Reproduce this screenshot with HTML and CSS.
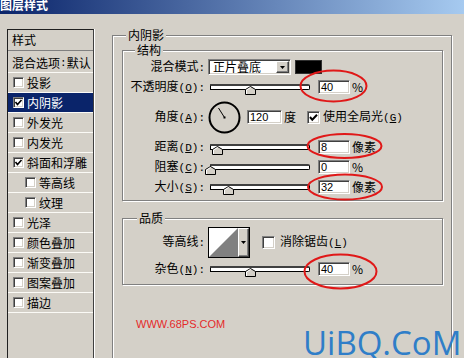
FILE: index.html
```html
<!DOCTYPE html>
<html lang="zh-CN">
<head>
<meta charset="utf-8">
<title>图层样式</title>
<link rel="stylesheet" href="styles.css">
</head>
<body>
<div class="titlebar"><span class="title">图层样式</span></div>
<div class="main">
  <div class="stylelist">
    <div class="lhdr">样式</div>
    <div class="item first">混合选项<span class="k">:</span>默认</div>
    <div class="item"><span class="cb"></span><span class="lt">投影</span></div>
    <div class="item sel"><span class="cb"><svg width="9" height="9" viewBox="0 0 9 9"><polyline points="1.5,4 3.5,6.5 7.5,2" fill="none" stroke="#000" stroke-width="1.6"/></svg></span><span class="lt">内阴影</span></div>
    <div class="item"><span class="cb"></span><span class="lt">外发光</span></div>
    <div class="item"><span class="cb"></span><span class="lt">内发光</span></div>
    <div class="item"><span class="cb"><svg width="9" height="9" viewBox="0 0 9 9"><polyline points="1.5,4 3.5,6.5 7.5,2" fill="none" stroke="#000" stroke-width="1.6"/></svg></span><span class="lt">斜面和浮雕</span></div>
    <div class="item sub"><span class="cb"></span><span class="lt">等高线</span></div>
    <div class="item sub"><span class="cb"></span><span class="lt">纹理</span></div>
    <div class="item"><span class="cb"></span><span class="lt">光泽</span></div>
    <div class="item"><span class="cb"></span><span class="lt">颜色叠加</span></div>
    <div class="item"><span class="cb"></span><span class="lt">渐变叠加</span></div>
    <div class="item"><span class="cb"></span><span class="lt">图案叠加</span></div>
    <div class="item"><span class="cb"></span><span class="lt">描边</span></div>
  </div>

  <div class="outer">
    <span class="legend">内阴影</span>

    <div class="grp struct">
      <span class="legend">结构</span>
      <div class="row">
        <div class="lbl">混合模式<span class="k">:</span></div>
        <div class="ctl">
          <div class="select"><span class="seltext">正片叠底</span><span class="dbtn"><svg width="5" height="3" viewBox="0 0 5 3"><polygon points="0,0 5,0 2.5,3" fill="#000"/></svg></span></div>
          <div class="swatch"></div>
        </div>
      </div>
      <div class="row">
        <div class="lbl">不透明度<span class="k">(<u>O</u>):</span></div>
        <div class="ctl">
          <div class="slider"><div class="track"></div><svg class="thumb" style="left:37px" width="11" height="9" viewBox="0 0 11 9"><polygon points="0.5,3.5 5.5,0.5 10.5,3.5 10.5,8.5 0.5,8.5" fill="#d4d0c8" stroke="#000"/><polyline points="1.5,8 1.5,4 5.5,1.6" fill="none" stroke="#fff"/></svg></div>
          <div class="num">40</div><span class="unit">%</span>
        </div>
      </div>
      <div class="row tall">
        <div class="lbl">角度<span class="k">(<u>A</u>):</span></div>
        <div class="ctl">
          <svg class="dial" width="33" height="33" viewBox="0 0 33 33"><circle cx="16.5" cy="16.5" r="15" fill="none" stroke="#000" stroke-width="2"/><line x1="16.5" y1="16.5" x2="10.5" y2="7" stroke="#000" stroke-width="1"/><rect x="15.5" y="15.5" width="2" height="2" fill="#000"/></svg>
          <div class="num wide">120</div><span class="unit">度</span>
          <span class="cb13 gl"><svg width="11" height="11" viewBox="0 0 11 11"><polyline points="2,5 4.3,7.8 9,2.8" fill="none" stroke="#000" stroke-width="2"/></svg></span>
          <span class="cbt">使用全局光<span class="k">(<u>G</u>)</span></span>
        </div>
      </div>
      <div class="row">
        <div class="lbl">距离<span class="k">(<u>D</u>):</span></div>
        <div class="ctl">
          <div class="slider"><div class="track"></div><svg class="thumb" style="left:4px" width="11" height="9" viewBox="0 0 11 9"><polygon points="0.5,3.5 5.5,0.5 10.5,3.5 10.5,8.5 0.5,8.5" fill="#d4d0c8" stroke="#000"/><polyline points="1.5,8 1.5,4 5.5,1.6" fill="none" stroke="#fff"/></svg></div>
          <div class="num">8</div><span class="unit">像素</span>
        </div>
      </div>
      <div class="row">
        <div class="lbl">阻塞<span class="k">(<u>C</u>):</span></div>
        <div class="ctl">
          <div class="slider"><div class="track"></div><svg class="thumb" style="left:-3px" width="11" height="9" viewBox="0 0 11 9"><polygon points="0.5,3.5 5.5,0.5 10.5,3.5 10.5,8.5 0.5,8.5" fill="#d4d0c8" stroke="#000"/><polyline points="1.5,8 1.5,4 5.5,1.6" fill="none" stroke="#fff"/></svg></div>
          <div class="num">0</div><span class="unit">%</span>
        </div>
      </div>
      <div class="row">
        <div class="lbl">大小<span class="k">(<u>S</u>):</span></div>
        <div class="ctl">
          <div class="slider"><div class="track"></div><svg class="thumb" style="left:15px" width="11" height="9" viewBox="0 0 11 9"><polygon points="0.5,3.5 5.5,0.5 10.5,3.5 10.5,8.5 0.5,8.5" fill="#d4d0c8" stroke="#000"/><polyline points="1.5,8 1.5,4 5.5,1.6" fill="none" stroke="#fff"/></svg></div>
          <div class="num">32</div><span class="unit">像素</span>
        </div>
      </div>
    </div>

    <div class="grp quality">
      <span class="legend">品质</span>
      <div class="row mid">
        <div class="lbl">等高线<span class="k">:</span></div>
        <div class="ctl">
          <div class="contour">
            <svg width="29" height="29" viewBox="0 0 29 29"><rect width="29" height="29" fill="#fff"/><polygon points="0,29 29,0 29,29" fill="#808080"/></svg>
            <span class="cbtn"><svg width="5" height="3" viewBox="0 0 5 3"><polygon points="0,0 5,0 2.5,3" fill="#000"/></svg></span>
          </div>
          <span class="cb13 aa"></span>
          <span class="cbt aat">消除锯齿<span class="k">(<u>L</u>)</span></span>
        </div>
      </div>
      <div class="row">
        <div class="lbl">杂色<span class="k">(<u>N</u>):</span></div>
        <div class="ctl">
          <div class="slider"><div class="track"></div><svg class="thumb" style="left:37px" width="11" height="9" viewBox="0 0 11 9"><polygon points="0.5,3.5 5.5,0.5 10.5,3.5 10.5,8.5 0.5,8.5" fill="#d4d0c8" stroke="#000"/><polyline points="1.5,8 1.5,4 5.5,1.6" fill="none" stroke="#fff"/></svg></div>
          <div class="num">40</div><span class="unit">%</span>
        </div>
      </div>
    </div>

    <div class="site">WWW.68PS.COM</div>
  </div>
</div>

<svg class="marks" width="464" height="358" viewBox="0 0 464 358">
  <ellipse cx="333.5" cy="86" rx="33" ry="15.5" fill="none" stroke="#e01818" stroke-width="2"/>
  <ellipse cx="344.5" cy="146" rx="37" ry="12" fill="none" stroke="#e01818" stroke-width="2"/>
  <ellipse cx="345" cy="187" rx="37" ry="12.5" fill="none" stroke="#e01818" stroke-width="2"/>
  <ellipse cx="340.5" cy="271.5" rx="36" ry="17" fill="none" stroke="#e01818" stroke-width="2"/>
</svg>
<div class="wm">UiBQ.CoM</div>
</body>
</html>
```

FILE: styles.css
```css
* { box-sizing: border-box; }
html, body { margin: 0; padding: 0; }
body {
  width: 464px;
  height: 358px;
  overflow: hidden;
  position: relative;
  background: #d4d0c8;
  font-family: "Noto Sans CJK SC", "Noto Sans", sans-serif;
  font-size: 12px;
  line-height: 14px;
  color: #000;
}
.k { font-family: "Liberation Mono", monospace; font-size: 11px; }
.k u { text-decoration: underline; }

.titlebar {
  height: 14px;
  overflow: hidden;
  background: linear-gradient(to right, #0a246a, #a6caf0);
}
.title {
  display: block;
  color: #fff;
  font-weight: bold;
  font-size: 12px;
  line-height: 12px;
  margin-top: -1px;
}

.main {
  display: flex;
  align-items: flex-start;
  gap: 18px;
  padding: 15px 0 0 7px;
}

/* style list */
.stylelist {
  flex: none;
  width: 87px;
  height: 340px;
  border: 1px solid #202020;
  border-right-color: #404040;
  box-shadow: 1px 0 0 #fff;
}
.lhdr {
  height: 21px;
  padding-left: 4px;
  line-height: 20px;
  border-bottom: 1px solid #808080;
}
.item {
  height: 20px;
  display: flex;
  align-items: center;
  padding-left: 5px;
  border-bottom: 1px solid #fbfaf6;
}
.item.first { margin-top: 2px; padding-left: 4px; }
.item.sub { padding-left: 17px; }
.item.sel { background: #0a246a; color: #fff; }
.cb {
  flex: none;
  width: 11px;
  height: 11px;
  background: #fff;
  border: 1px solid;
  border-color: #808080 #fff #fff #808080;
  box-shadow: inset 1px 1px 0 #404040, inset -1px -1px 0 #d4d0c8;
  display: flex;
  align-items: center;
  justify-content: center;
}
.cb svg { display: block; }
.lt { margin-left: 3px; }

/* right panel */
.outer {
  position: relative;
  flex: none;
  width: 340px;
  height: 330px;
  margin-top: 6px;
  padding: 14px 0 0 9px;
  border: 1px solid #808080;
  box-shadow: inset 1px 1px 0 #fff, 1px 1px 0 #fff;
}
.legend {
  position: absolute;
  top: -7px;
  left: 13px;
  padding: 0 2px;
  background: #d4d0c8;
  line-height: 12px;
}
.grp {
  position: relative;
  width: 321px;
  border: 1px solid #808080;
  box-shadow: inset 1px 1px 0 #fff, 1px 1px 0 #fff;
}
.grp .legend { left: 12px; }
.quality .legend { left: 14px; }
.struct { padding: 6px 0 3px 0; }
.quality { margin-top: 17px; padding: 6px 0 5px 0; }

.row {
  display: flex;
  align-items: center;
  height: 20px;
}
.row.tall { height: 40px; }
.row.mid { height: 34px; }
.lbl {
  flex: none;
  width: 82px;
  text-align: right;
  white-space: nowrap;
}
.ctl {
  display: flex;
  align-items: center;
  margin-left: 3px;
  height: 100%;
}

.select {
  width: 83px;
  height: 16px;
  display: flex;
  align-items: center;
  justify-content: space-between;
  background: #fff;
  border: 1px solid;
  border-color: #808080 #fff #fff #808080;
  box-shadow: inset 1px 1px 0 #404040, inset -1px -1px 0 #d4d0c8;
  padding: 1px;
}
.seltext { padding-left: 3px; line-height: 12px; }
.dbtn, .cbtn {
  display: flex;
  align-items: center;
  justify-content: center;
  background: #d4d0c8;
  border: 1px solid;
  border-color: #fff #404040 #404040 #fff;
  box-shadow: inset -1px -1px 0 #808080;
}
.dbtn { width: 13px; height: 12px; }
.swatch { width: 27px; height: 14px; margin-left: 4px; background: #000; border: 1px solid #303030; }

.slider {
  position: relative;
  flex: none;
  width: 102px;
  height: 20px;
  align-self: flex-start;
}
.track {
  width: 100px;
  height: 6px;
  margin: 7px 0 0 2px;
  background: #fff;
  border: 1px solid #000;
  border-top: 2px solid #404040;
  border-radius: 0 2px 2px 0;
}
.thumb { position: absolute; top: 9px; display: block; }

.num {
  flex: none;
  width: 32px;
  height: 14px;
  margin-left: 8px;
  padding-left: 2px;
  background: #fff;
  border: 1px solid;
  border-color: #808080 #fff #fff #808080;
  box-shadow: inset 1px 1px 0 #404040, inset -1px -1px 0 #d4d0c8;
  font-family: "Liberation Sans", sans-serif;
  font-size: 11px;
  line-height: 12px;
}
.num.wide { width: 35px; margin-left: 6px; }
.unit { margin-left: 2px; }
.dial { display: block; margin-left: 0; }

.cb13 {
  flex: none;
  width: 13px;
  height: 13px;
  background: #fff;
  border: 1px solid;
  border-color: #808080 #fff #fff #808080;
  box-shadow: inset 1px 1px 0 #404040, inset -1px -1px 0 #d4d0c8;
  display: flex;
  align-items: center;
  justify-content: center;
}
.cb13.gl { margin-left: 11px; }
.cbt { margin-left: 3px; white-space: nowrap; }
.cb13.aa { margin-left: 12px; }
.cbt.aat { margin-left: 5px; }

.contour {
  display: flex;
  height: 31px;
  border: 1px solid #000;
}
.contour svg { display: block; }
.cbtn { width: 11px; height: 29px; }

.site {
  margin: 33px 0 0 14px;
  color: #e42a2a;
  font-family: "Liberation Sans", sans-serif;
  font-size: 11px;
  line-height: 13px;
}

.marks { position: absolute; left: 0; top: 0; pointer-events: none; }
.wm {
  position: absolute;
  left: 303px;
  top: 326px;
  font-family: "Open Sans", sans-serif;
  font-size: 33px;
  line-height: 33px;
  color: #2f7ec8;
  white-space: nowrap;
}
```
